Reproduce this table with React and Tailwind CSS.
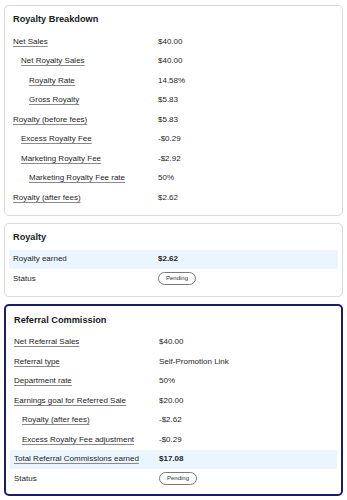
import React from 'react';

const breakdown = [
  { label: 'Net Sales', value: '$40.00', level: 0 },
  { label: 'Net Royalty Sales', value: '$40.00', level: 1 },
  { label: 'Royalty Rate', value: '14.58%', level: 2 },
  { label: 'Gross Royalty', value: '$5.83', level: 2 },
  { label: 'Royalty (before fees)', value: '$5.83', level: 0 },
  { label: 'Excess Royalty Fee', value: '-$0.29', level: 1 },
  { label: 'Marketing Royalty Fee', value: '-$2.92', level: 1 },
  { label: 'Marketing Royalty Fee rate', value: '50%', level: 2 },
  { label: 'Royalty (after fees)', value: '$2.62', level: 0 },
];

const referral = [
  { label: 'Net Referral Sales', value: '$40.00', level: 0 },
  { label: 'Referral type', value: 'Self-Promotion Link', level: 0 },
  { label: 'Department rate', value: '50%', level: 0 },
  { label: 'Earnings goal for Referred Sale', value: '$20.00', level: 0 },
  { label: 'Royalty (after fees)', value: '-$2.62', level: 1 },
  { label: 'Excess Royalty Fee adjustment', value: '-$0.29', level: 1 },
];

const indent = ['pl-0', 'pl-[8px]', 'pl-[16px]'];

function Row({ label, value, level = 0, underline = true, highlight = false, bold = false, children }) {
  return (
    <div className={`flex items-center h-[19.5px] px-[4px] ${highlight ? 'bg-[#eaf5fe]' : ''}`}>
      <div className={`w-[145px] shrink-0 ${indent[level]}`}>
        <span className={underline ? 'underline decoration-[#8a8a8a] underline-offset-[2px]' : ''}>{label}</span>
      </div>
      <div className={bold ? 'font-bold' : ''}>{children || value}</div>
    </div>
  );
}

function Pending() {
  return (
    <span className="inline-flex items-center justify-center w-[38px] h-[13px] rounded-full border border-[#7a7a7a] text-[6px] text-[#333]">
      Pending
    </span>
  );
}

function Card({ title, navy = false, children }) {
  return (
    <div
      className={`rounded-[5px] bg-white px-[4px] ${
        navy ? 'border-2 border-[#1b1c6a] pt-[8px] pb-[5px]' : 'border border-[#dadada] pt-[7px] pb-[7px]'
      }`}
    >
      <h2 className="px-[4px] text-[9.2px] leading-[12px] font-bold text-[#1a1a1a] mb-[7px]">{title}</h2>
      {children}
    </div>
  );
}

export default function App() {
  return (
    <div className="bg-white min-h-[500px] px-[4px] pt-[5px] flex flex-col gap-[7px] text-[8px] text-[#1f1f1f] font-['Liberation_Sans',Arial,sans-serif]">
      <Card title="Royalty Breakdown">
        {breakdown.map((r) => (
          <Row key={r.label} {...r} />
        ))}
      </Card>

      <Card title="Royalty">
        <Row label="Royalty earned" value="$2.62" underline={false} highlight bold />
        <Row label="Status" underline={false}>
          <Pending />
        </Row>
      </Card>

      <Card title="Referral Commission" navy>
        {referral.map((r) => (
          <Row key={r.label} {...r} />
        ))}
        <Row label="Total Referral Commissions earned" value="$17.08" highlight bold />
        <Row label="Status" underline={false}>
          <Pending />
        </Row>
      </Card>
    </div>
  );
}
